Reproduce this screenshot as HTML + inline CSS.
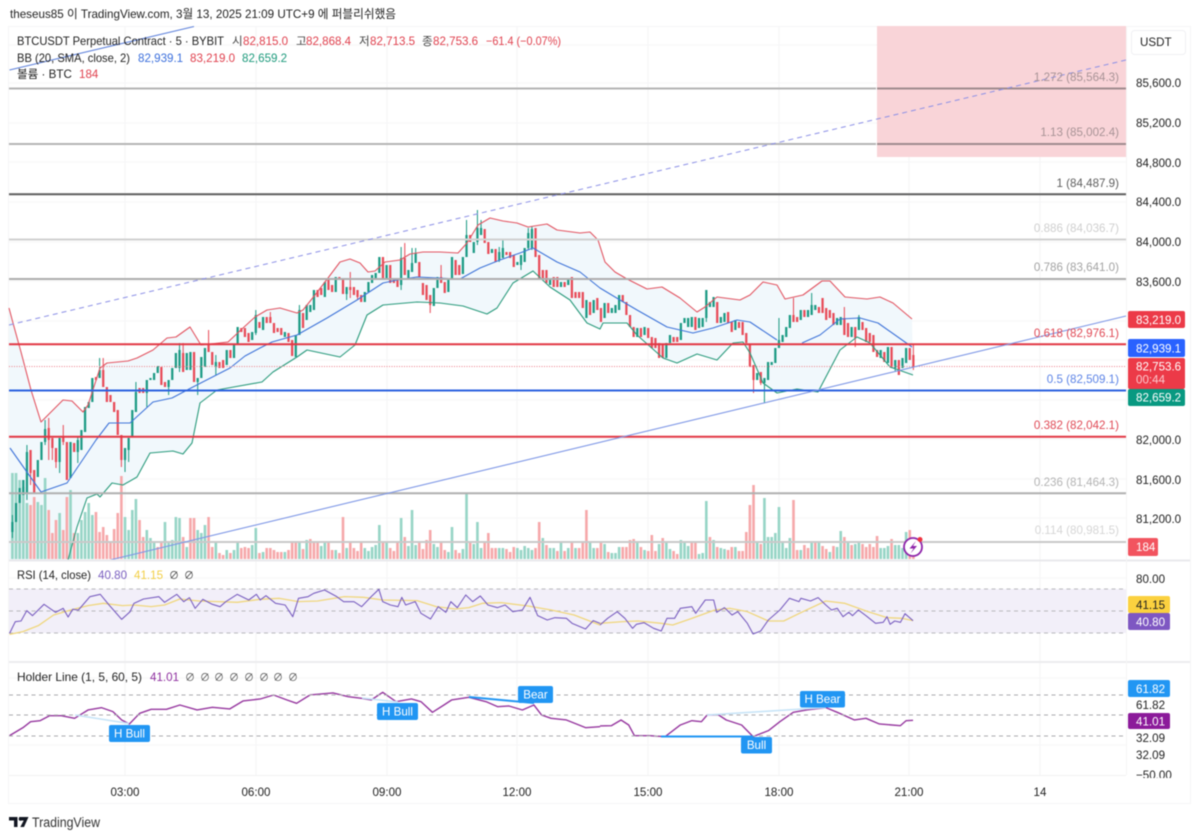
<!DOCTYPE html>
<html><head><meta charset="utf-8"><style>
html,body{margin:0;padding:0;background:#fff;width:1200px;height:839px;overflow:hidden}
svg{display:block}
#r{filter:blur(.5px)}
text{font-family:"Liberation Sans","Noto Sans CJK KR",sans-serif;font-size:11.6px;fill:#222}
.ax{fill:#1a1a1a}
.f{text-anchor:end}
</style></head><body>
<svg id="r" width="1200" height="839" viewBox="0 0 1200 839" xmlns="http://www.w3.org/2000/svg">
<rect x="0" y="0" width="1200" height="839" fill="#fff"/>
<text x="10" y="18" textLength="386" lengthAdjust="spacingAndGlyphs" style="font-size:12px">theseus85 이 TradingView.com, 3월 13, 2025 21:09 UTC+9 에 퍼블리쉬했음</text>
<!-- frame -->
<path d="M8.5 26.5H1190.5V803.5H8.5Z" fill="none" stroke="#f5f5f6"/>
<!-- grid -->
<path d="M125 27V775M256 27V775M387 27V775M517 27V775M648 27V775M779 27V775M909 27V775M1040 27V775" stroke="#f4f4f5" fill="none"/>
<path d="M9 45H1126M9 83H1126M9 123H1126M9 162H1126M9 202H1126M9 242H1126M9 281H1126M9 321H1126M9 360H1126M9 400H1126M9 439H1126M9 479H1126M9 518H1126M9 578H1126M9 678H1126M9 745H1126" stroke="#f6f6f7" fill="none"/>
<!-- pink box -->
<rect x="877" y="26" width="249" height="131" fill="#f9d4d8"/>
<!-- BB fill -->
<path fill="#f1f8fc" d="M9 308L13 323L21 352L31 390L41 422L63 400L72 401L83 412L88 405L100 368L107 363L128 361L137 358L153 350L167 338L176 337L190 327L201 345L228 342L243 328L255 317L267 310L280 308L297 313L303 310L315 295L328 278L340 262L350 259L360 263L368 272L375 271L385 262L400 260L410 254L423 252L440 252L458 253L467 243L478 225L490 218L503 221L517 223L528 227L547 224L557 230L580 233L590 232L598 240L605 262L615 272L627 279L647 289L662 287L680 298L697 312L705 307L717 297L740 300L750 295L763 282L777 285L785 299L803 295L822 281L830 281L845 297L867 299L880 297L893 303L912 319L913 375L890 367L870 343L857 337L840 350L818 392L797 389L777 393L763 383L750 353L743 342L733 343L717 360L697 354L677 363L663 358L637 335L627 323L603 323L600 329L587 323L570 300L550 287L533 271L513 283L497 308L487 314L463 306L440 303L417 302L383 305L367 315L355 345L340 357L307 350L297 357L273 372L262 382L217 390L200 403L192 443L183 454L173 451L150 453L137 477L123 485L112 483L100 497L97 494L87 498L77 527L68 560L9 560Z"/>
<!-- volume -->
<g transform="translate(12.4 0) scale(3.633 1)" fill="none" stroke-width=".72">
<path stroke="#97d5c6" d="M0 559V473M1 559V473M2 559V480M3 559V487M4 559V503M7 559V502M8 559V505M9 559V478M13 559V513M16 559V490M18 559V533M19 559V520M20 559V512M21 559V503M22 559V515M31 559V517M32 559V530M33 559V510M34 559V499M37 559V530M38 559V538M39 559V543M42 559V522M43 559V543M44 559V540M45 559V517M46 559V518M48 559V547M51 559V530M52 559V533M53 559V525M56 559V543M59 559V550M61 559V550M62 559V543M66 559V545M67 559V528M69 559V552M75 559V552M79 559V541M81 559V540M85 559V546M86 559V542M89 559V550M92 559V548M97 559V548M98 559V551M99 559V547M100 559V545M101 559V525M103 559V542M107 559V518M109 559V546M110 559V510M111 559V545M116 559V544M117 559V547M120 559V552M121 559V527M124 559V549M125 559V493M127 559V544M128 559V522M129 559V548M134 559V548M135 559V548M139 559V548M140 559V550M141 559V546M142 559V548M143 559V550M146 559V538M148 559V548M149 559V548M151 559V542M153 559V548M155 559V548M159 559V543M160 559V548M163 559V544M165 559V553M166 559V553M167 559V547M172 559V542M174 559V550M178 559V544M180 559V543M181 559V549M184 559V540M185 559V542M186 559V546M189 559V554M190 559V553M191 559V501M193 559V540M195 559V548M196 559V549M199 559V547M205 559V542M207 559V498M208 559V537M209 559V537M210 559V533M211 559V507M212 559V543M213 559V548M214 559V538M217 559V550M220 559V542M222 559V542M225 559V552M227 559V547M228 559V531M230 559V541M232 559V544M233 559V542M239 559V548M240 559V548M241 559V546M243 559V545M244 559V545M245 559V548M246 559V532"/>
<path stroke="#f6a8aa" d="M5 559V505M6 559V497M10 559V510M11 559V533M12 559V520M14 559V530M15 559V497M17 559V533M23 559V512M24 559V532M25 559V527M26 559V535M27 559V543M28 559V529M29 559V513M30 559V476M35 559V520M36 559V537M40 559V547M41 559V543M47 559V537M49 559V518M50 559V518M54 559V517M55 559V547M57 559V553M58 559V555M60 559V553M63 559V548M64 559V547M65 559V548M68 559V553M70 559V548M71 559V548M72 559V550M73 559V552M74 559V552M76 559V550M77 559V543M78 559V542M80 559V549M82 559V539M83 559V541M84 559V542M87 559V543M88 559V550M90 559V553M91 559V517M93 559V543M94 559V548M95 559V551M96 559V542M102 559V543M104 559V548M105 559V551M106 559V543M108 559V537M112 559V543M113 559V549M114 559V540M115 559V530M118 559V541M119 559V550M122 559V550M123 559V553M126 559V541M130 559V542M131 559V533M132 559V548M133 559V548M136 559V549M137 559V552M138 559V547M144 559V548M145 559V522M147 559V545M150 559V551M152 559V551M154 559V541M156 559V548M157 559V541M158 559V510M161 559V548M162 559V542M164 559V552M168 559V547M169 559V547M170 559V540M171 559V539M173 559V547M175 559V551M176 559V535M177 559V551M179 559V538M182 559V551M183 559V554M187 559V543M188 559V543M192 559V537M194 559V547M197 559V550M198 559V547M200 559V551M201 559V551M202 559V532M203 559V505M204 559V485M206 559V544M215 559V500M216 559V550M218 559V545M219 559V548M221 559V542M223 559V546M224 559V549M226 559V546M229 559V537M231 559V545M234 559V544M235 559V547M236 559V544M237 559V547M238 559V536M242 559V539M247 559V530M248 559V545"/>
</g>
<!-- candles -->
<g transform="translate(12.4 0) scale(3.633 1)" fill="none">
<g stroke="#1c9a84">
<path stroke-width=".62" d="M0 522V532M1 503V522M2 488V503M3 480V495M4 452V493M7 460V477M8 442V460M9 429V442M13 438V462M16 442V478M18 440V452M19 430V450M20 407V432M21 402V408M22 378V402M24 370V378M31 448V460M32 438V450M33 410V437M34 392V412M37 380V393M38 378V380M39 373V380M40 366V373M43 380V387M44 368V380M45 353V368M46 350V368M48 353V370M49 352V370M51 378V382M52 357V378M53 348V367M56 362V366M59 350V365M61 345V358M62 327V345M66 332V340M67 315V333M69 317V330M75 332V337M78 335V357M79 310V335M81 305V320M82 305V312M83 290V310M86 282V297M89 277V292M92 287V294M97 292V302M98 282V292M99 275V283M100 273V278M101 257V273M103 265V280M107 258V285M109 270V280M110 263V272M111 253V263M116 288V306M117 277V288M120 280V292M121 257V280M124 257V274M125 235V257M127 242V253M128 228V242M129 228V235M132 249V253M134 252V260M135 248V258M139 262V265M140 255V265M141 248V262M142 233V248M143 229V248M148 280V285M151 282V287M153 280V285M158 300V318M160 300V313M163 303V318M165 308V313M166 305V313M167 295V310M172 328V337M174 327V335M180 343V358M181 335V343M184 323V340M185 318V323M186 318V327M187 317V327M189 318V328M190 318V327M191 290V318M192 302V307M193 297V307M195 317V323M196 313V322M199 320V330M205 373V380M207 378V383M208 362V380M209 362V365M210 348V363M211 340V348M212 335V342M213 327V337M214 315V328M217 310V320M219 310V317M220 305V315M221 305V310M227 318V325M228 317V325M231 327V337M233 317V330M239 350V358M241 347V363M243 360V368M245 358V368M246 348V363"/>
<path stroke-width=".28" d="M0 515V538M4 445V500M9 420V445M13 438V473M18 436V463M22 378V385M24 358V378M31 448V472M32 438V462M34 382V392M37 380V407M43 380V395M46 343V372M51 378V395M56 355V375M67 310V335M79 305V320M92 287V300M107 247V290M110 248V272M111 248V263M125 220V257M128 210V245M129 220V235M134 247V262M135 240V258M140 255V270M142 228V250M143 226V250M191 290V322M207 378V403M211 318V348M220 293V315M233 315V330M243 360V372"/>
</g>
<g stroke="#e84b58">
<path stroke-width=".62" d="M5 450V473M6 470V493M10 428V440M11 438V448M12 448V462M14 437V442M15 442V480M17 443V452M23 377V380M25 370V387M26 387V402M27 395V402M28 402V412M29 410V435M30 435V460M35 388V393M36 388V393M41 367V385M42 382V387M47 353V372M50 352V382M54 345V352M55 352V365M57 362V368M58 360V368M60 350V358M63 328V332M64 328V337M65 333V342M68 322V328M70 317V323M71 317V323M72 323V333M73 328V332M74 328V335M76 333V342M77 340V356M80 313V328M84 290V297M85 288V295M87 280V290M88 285V292M90 277V280M91 280V294M93 287V290M94 287V295M95 290V297M96 295V302M102 257V280M104 265V283M105 280V283M106 280V287M108 258V275M112 262V277M113 283V295M114 285V300M115 295V305M118 277V283M119 282V293M122 260V275M123 265V275M126 235V242M130 229V243M131 242V254M133 249V262M136 252V255M137 252V258M138 255V267M144 228V257M145 255V278M146 270V278M147 270V283M149 277V287M150 277V287M152 282V287M154 277V298M155 292V298M156 292V298M157 292V308M159 302V315M161 298V310M162 308V322M164 303V313M168 295V302M169 302V315M170 315V327M171 327V337M173 328V337M175 328V338M176 337V348M177 338V348M178 343V358M179 345V358M182 337V342M183 337V342M188 317V330M194 302V323M197 312V323M198 322V332M200 322V328M201 322V335M202 333V343M203 345V367M204 365V380M206 372V383M215 315V322M216 317V322M218 310V317M222 307V313M223 298V313M224 308V320M225 310V318M226 313V325M229 318V335M230 323V337M232 327V338M234 322V330M235 328V342M236 333V342M237 335V352M238 350V357M240 352V362M242 347V368M244 360V375M247 348V360M248 355V367"/>
<path stroke-width=".28" d="M5 450V485M10 418V460M11 438V460M12 448V468M14 425V445M25 358V387M30 435V467M47 343V372M54 330V352M71 312V323M93 272V298M95 290V300M108 243V275M115 295V313M118 265V283M204 365V393M206 372V385M215 298V322M229 307V335M232 327V347M248 345V370"/>
</g>
</g>
<!-- BB lines -->
<g fill="none" stroke-width="1.1" stroke-linejoin="round">
<path stroke="#e25562" d="M9 308L13 323L21 352L31 390L41 422L63 400L72 401L83 412L88 405L100 368L107 363L128 361L137 358L153 350L167 338L176 337L190 327L201 345L228 342L243 328L255 317L267 310L280 308L297 313L303 310L315 295L328 278L340 262L350 259L360 263L368 272L375 271L385 262L400 260L410 254L423 252L440 252L458 253L467 243L478 225L490 218L503 221L517 223L528 227L547 224L557 230L580 233L590 232L598 240L605 262L615 272L627 279L647 289L662 287L680 298L697 312L705 307L717 297L740 300L750 295L763 282L777 285L785 299L803 295L822 281L830 281L845 297L867 299L880 297L893 303L912 319"/>
<path stroke="#3f74d9" d="M10 448L41 492L67 483L96 440L109 423L130 423L153 402L172 398L191 388L230 368L245 356L260 348L272 342L297 335L327 318L357 300L383 283L397 280L417 277L460 279L480 268L500 260L520 253L533 248L557 262L580 272L600 288L620 300L637 310L667 327L693 333L713 328L737 320L750 322L777 340M802 343L820 335L840 319L860 318L878 323L912 347"/>
<path stroke="#2b9b7d" d="M68 560L77 527L87 498L97 494L100 497L112 483L123 485L137 477L150 453L173 451L183 454L192 443L200 403L217 390L262 382L273 372L297 357L307 350L340 357L355 345L367 315L383 305L417 302L440 303L463 306L487 314L497 308L513 283L533 271L550 287L570 300L587 323L600 329L603 323L627 323L637 335L663 358L677 363L697 354L717 360L733 343L743 342L750 353L763 383L777 393L797 389L818 392L840 350L857 337L870 343L890 367L913 375"/>
</g>
<!-- price dotted -->
<path d="M9 366.5H1126" stroke="#ee7f88" stroke-dasharray="1 1.5" fill="none"/>
<!-- fib lines -->
<g fill="none">
<path d="M9 88.5H876" stroke="#b4b4b4" stroke-width="2"/>
<path d="M9 144H876" stroke="#b4b4b4" stroke-width="2"/>
<path d="M877 88.5H1126M877 144H1126" stroke="#a08b8e" stroke-width="2"/>
<path d="M9 194.3H1126" stroke="#5e5e5e" stroke-width="2"/>
<path d="M9 239.5H1126" stroke="#d0d0d0" stroke-width="2"/>
<path d="M9 279H1126" stroke="#adadad" stroke-width="2"/>
<path d="M9 344.3H1126" stroke="#e23744" stroke-width="2"/>
<path d="M9 390.5H1126" stroke="#2c62df" stroke-width="2"/>
<path d="M9 436.8H1126" stroke="#e23744" stroke-width="2"/>
<path d="M9 493.3H1126" stroke="#b0b0b0" stroke-width="2"/>
<path d="M9 542H1126" stroke="#c9c9c9" stroke-width="2"/>
<!-- trendlines -->
<path d="M9 325L1126 60" stroke="#8b8fe6" stroke-width="1" stroke-dasharray="5 4"/>
<path d="M110 560L1126 316" stroke="#7e97e6" stroke-width="1.1"/>
<path d="M9.5 70L194 26.5" stroke="#5f82db" stroke-width="1.1"/>
</g>
<!-- pane dividers -->
<path d="M9 560.5H1190" stroke="#e9e9ec" stroke-width="2"/>
<path d="M9 662H1190" stroke="#ececee" stroke-width="2"/>
<path d="M9 775.5H1126" stroke="#f2f2f2"/>
<path d="M1126.5 27V775" stroke="#f5f5f5"/>
<!-- flash icon -->
<circle cx="913" cy="547" r="9" fill="#fff" stroke="#8e24aa" stroke-width="1.8"/>
<path d="M916 541L909.5 548.5H913.5L910.5 553.5L917 546H913Z" fill="#8e24aa"/>
<circle cx="920" cy="539.5" r="2.5" fill="#ef3340"/>
<!-- RSI -->
<rect x="9" y="589" width="1117" height="44" fill="#f2eff9"/>
<path d="M9 589H1126M9 611H1126M9 633H1126" stroke="#b8b8bc" stroke-dasharray="4 3.5" fill="none"/>
<g fill="none" stroke-linejoin="round">
<g transform="translate(0 555) scale(.3827 .3333)">
<path vector-effect="non-scaling-stroke" stroke="#f0d77e" stroke-width="1.3" d="M25 238L60 230L100 212L140 180L185 165L230 152L270 145L320 152L350 150L395 155L430 150L470 132L520 138L570 140L620 142L680 133L730 130L780 140L830 138L900 125L950 127L1000 135L1090 137L1140 155L1190 162L1225 158L1260 145L1310 143L1380 153L1440 165L1500 180L1568 210"/>
<path vector-effect="non-scaling-stroke" stroke="#7a5fc0" stroke-width="1.1" d="M25 235L40 200L55 198L70 167L85 182L115 148L145 172L165 160L178 186L190 163L205 165L235 125L262 118L285 150L318 193L340 170L350 145L375 132L415 125L430 142L462 118L480 140L495 128L510 160L530 133L555 148L575 155L590 140L620 118L650 135L670 118L680 135L695 122L720 145L745 150L765 185L780 130L805 125L820 115L848 105L880 125L898 140L925 140L945 155L970 125L990 103L1000 140L1020 150L1040 155L1050 127L1060 150L1085 140L1100 175L1125 192L1145 155L1165 172L1178 140L1195 158L1217 120L1235 140L1255 123L1275 150L1300 158L1320 150L1340 170L1365 165L1385 127L1405 182L1430 195L1450 188L1480 190L1495 205L1530 222L1550 197L1568 205"/>
<path vector-effect="non-scaling-stroke" stroke="#96379f" stroke-width="1.4" d="M25 542L60 518L80 500L105 497L130 482L160 482L195 490L230 465L265 458L295 470L318 495L338 507L365 475L395 463L435 463L470 450L515 465L555 457L600 462L635 438L680 432L715 420L750 435L775 445L810 420L870 414L910 425L945 430L970 435L1000 412L1035 440L1075 432L1100 440L1130 472L1160 450L1180 435L1225 427L1270 440L1300 455L1330 453L1365 465L1395 450L1415 480L1440 490L1480 495L1530 518L1568 515"/>
</g>
<g transform="translate(600 555) scale(.3827 .3333)">
<path vector-effect="non-scaling-stroke" stroke="#f0d77e" stroke-width="1.3" d="M0 205L60 200L100 198L160 205L190 210L240 190L300 165L340 160L385 170L440 198L480 198L530 170L590 138L640 145L700 170L750 188L790 190L818 197"/>
<path vector-effect="non-scaling-stroke" stroke="#7a5fc0" stroke-width="1.1" d="M0 210L20 190L45 170L65 190L85 220L95 208L115 203L140 220L160 228L175 190L195 190L210 160L240 155L250 175L275 135L297 135L305 172L325 158L345 180L360 170L385 205L400 237L420 228L440 195L470 165L495 130L520 140L525 130L550 138L570 128L590 150L605 165L620 160L635 185L650 172L660 182L675 165L695 182L720 205L740 202L750 185L758 208L770 198L785 202L797 176L818 197"/>
<path vector-effect="non-scaling-stroke" stroke="#96379f" stroke-width="1.4" d="M0 513L30 512L55 495L75 510L90 542L130 542L170 545L210 510L240 497L265 500L280 480L310 480L330 495L370 510L400 545L440 527L470 500L505 472L540 465L590 458L620 472L665 495L695 490L730 507L785 512L800 497L818 496"/>
</g>
</g>
<!-- holder dashed -->
<path d="M9 695H1126M9 715H1126M9 736H1126" stroke="#a9a9ad" stroke-dasharray="4 3.5" fill="none"/>
<!-- holder divergence lines -->
<g fill="none">
<path d="M75 715L129 723.5" stroke="#c5e3f7" stroke-width="1.5"/>
<path d="M362 698L398 702" stroke="#c5e3f7" stroke-width="1.5"/>
<path d="M707 715L826 707.5" stroke="#c5e3f7" stroke-width="1.5"/>
<path d="M469 697L534 703" stroke="#2196f3" stroke-width="2"/>
<path d="M661 736.5H753" stroke="#2196f3" stroke-width="2"/>
</g>
<!-- holder labels -->
<rect x="109" y="725" width="41" height="17" rx="2" fill="#2196f3"/><text x="129.5" y="737.5" text-anchor="middle" style="fill:#fff">H Bull</text>
<rect x="377" y="703" width="41" height="17" rx="2" fill="#2196f3"/><text x="397.5" y="715.5" text-anchor="middle" style="fill:#fff">H Bull</text>
<rect x="518" y="686" width="35" height="17" rx="2" fill="#2196f3"/><text x="535.5" y="698.5" text-anchor="middle" style="fill:#fff">Bear</text>
<rect x="800" y="691" width="45" height="16.5" rx="2" fill="#2196f3"/><text x="822.5" y="703" text-anchor="middle" style="fill:#fff">H Bear</text>
<rect x="741" y="737" width="31" height="16.5" rx="2" fill="#2196f3"/><text x="756.5" y="749" text-anchor="middle" style="fill:#fff">Bull</text>
<!-- fib labels -->
<text class="f" x="1119" y="81" style="fill:#a89396">1.272 (85,564.3)</text>
<text class="f" x="1119" y="136" style="fill:#a89396">1.13 (85,002.4)</text>
<text class="f" x="1119" y="187" style="fill:#5f5f5f">1 (84,487.9)</text>
<text class="f" x="1119" y="232" style="fill:#cfcfcf">0.886 (84,036.7)</text>
<text class="f" x="1119" y="271" style="fill:#a3a3a3">0.786 (83,641.0)</text>
<text class="f" x="1119" y="337" style="fill:#e04a56">0.618 (82,976.1)</text>
<text class="f" x="1119" y="383" style="fill:#5d84e6">0.5 (82,509.1)</text>
<text class="f" x="1119" y="429" style="fill:#e04a56">0.382 (82,042.1)</text>
<text class="f" x="1119" y="486" style="fill:#b4b4b4">0.236 (81,464.3)</text>
<text class="f" x="1119" y="534" style="fill:#d6d6d6">0.114 (80,981.5)</text>
<!-- legend -->
<text x="17" y="45" textLength="207" lengthAdjust="spacingAndGlyphs">BTCUSDT Perpetual Contract · 5 · BYBIT</text>
<text x="232" y="45" style="fill:#444">시</text><text x="243" y="45" style="fill:#e0414e">82,815.0</text>
<text x="296" y="45" style="fill:#444">고</text><text x="306" y="45" style="fill:#e0414e">82,868.4</text>
<text x="359" y="45" style="fill:#444">저</text><text x="370" y="45" style="fill:#e0414e">82,713.5</text>
<text x="422" y="45" style="fill:#444">종</text><text x="433" y="45" style="fill:#e0414e">82,753.6</text>
<text x="486" y="45" textLength="75" lengthAdjust="spacingAndGlyphs" style="fill:#e0414e">−61.4 (−0.07%)</text>
<text x="17" y="62" textLength="113" lengthAdjust="spacingAndGlyphs">BB (20, SMA, close, 2)</text>
<text x="138" y="62" style="fill:#3b6fdc">82,939.1</text>
<text x="190" y="62" style="fill:#e0414e">83,219.0</text>
<text x="242" y="62" style="fill:#1d9a7c">82,659.2</text>
<text x="17" y="78">볼륨 · BTC</text>
<text x="79" y="78" style="fill:#e0414e">184</text>
<text x="17" y="579" textLength="74" lengthAdjust="spacingAndGlyphs">RSI (14, close)</text>
<text x="98" y="579" style="fill:#7a5fc0">40.80</text>
<text x="134" y="579" style="fill:#f2cf45">41.15</text>
<text x="169" y="579" style="fill:#444;font-size:10px">∅</text><text x="184" y="579" style="fill:#444;font-size:10px">∅</text>
<text x="17" y="681" textLength="125" lengthAdjust="spacingAndGlyphs">Holder Line (1, 5, 60, 5)</text>
<text x="150" y="681" style="fill:#8e2f9f">41.01</text>
<text x="185" y="681" style="fill:#555;font-size:10px">∅</text><text x="200" y="681" style="fill:#555;font-size:10px">∅</text><text x="214" y="681" style="fill:#555;font-size:10px">∅</text><text x="229" y="681" style="fill:#555;font-size:10px">∅</text><text x="244" y="681" style="fill:#555;font-size:10px">∅</text><text x="259" y="681" style="fill:#555;font-size:10px">∅</text><text x="273" y="681" style="fill:#555;font-size:10px">∅</text><text x="288" y="681" style="fill:#555;font-size:10px">∅</text>
<!-- axis -->
<rect x="1131.5" y="30.5" width="54" height="24" rx="3" fill="#fff" stroke="#f0f0f3"/>
<text x="1140" y="46">USDT</text>
<text x="1136" y="87">85,600.0</text>
<text x="1136" y="127">85,200.0</text>
<text x="1136" y="167">84,800.0</text>
<text x="1136" y="206">84,400.0</text>
<text x="1136" y="246">84,000.0</text>
<text x="1136" y="286">83,600.0</text>
<text x="1136" y="444">82,000.0</text>
<text x="1136" y="484">81,600.0</text>
<text x="1136" y="523">81,200.0</text>
<text x="1136" y="583">80.00</text>
<text x="1136" y="709">61.82</text>
<text x="1136" y="742">32.09</text>
<text x="1136" y="759">32.09</text>
<svg x="1130" y="765" width="60" height="13"><text x="6" y="14">−50.00</text></svg>
<!-- tags -->
<rect x="1128" y="311" width="57" height="17" rx="2" fill="#ec3a48"/><text x="1136" y="324" style="fill:#fff">83,219.0</text>
<rect x="1128" y="339" width="57" height="18" rx="2" fill="#2962ff"/><text x="1136" y="352.5" style="fill:#fff">82,939.1</text>
<rect x="1128" y="358" width="57" height="31" rx="2" fill="#ec3a48"/><text x="1136" y="370.5" style="fill:#fff">82,753.6</text><text x="1136" y="383.5" style="fill:#fbc7cc">00:44</text>
<rect x="1128" y="389" width="57" height="17" rx="2" fill="#089981"/><text x="1136" y="401.5" style="fill:#fff">82,659.2</text>
<rect x="1128" y="538" width="30" height="18" rx="2" fill="#f2545f"/><text x="1136" y="551" style="fill:#fff">184</text>
<rect x="1128" y="596" width="42" height="17" rx="2" fill="#fbd13f"/><text x="1136" y="609" style="fill:#222">41.15</text>
<rect x="1128" y="613" width="42" height="17" rx="2" fill="#7e57c2"/><text x="1136" y="626" style="fill:#fff">40.80</text>
<rect x="1128" y="680" width="42" height="17" rx="2" fill="#2196f3"/><text x="1136" y="693" style="fill:#fff">61.82</text>
<rect x="1128" y="713" width="42" height="16" rx="2" fill="#8b1a9a"/><text x="1136" y="725.5" style="fill:#fff">41.01</text>
<!-- time axis -->
<g text-anchor="middle">
<text x="125" y="796">03:00</text>
<text x="256" y="796">06:00</text>
<text x="387" y="796">09:00</text>
<text x="517" y="796">12:00</text>
<text x="648" y="796">15:00</text>
<text x="779" y="796">18:00</text>
<text x="909" y="796">21:00</text>
<text x="1040" y="796">14</text>
</g>
<!-- logo -->
<path d="M9 817H17.5V827H14V820.5H9ZM19.2 817H28.5L24 827H20.3L23.7 820.5H19.2Z" fill="#131722"/><circle cx="20.5" cy="819" r="1.8" fill="#131722"/>
<text x="32" y="827" textLength="68" lengthAdjust="spacingAndGlyphs" style="font-size:13.5px;fill:#333">TradingView</text>
</svg>
</body></html>
